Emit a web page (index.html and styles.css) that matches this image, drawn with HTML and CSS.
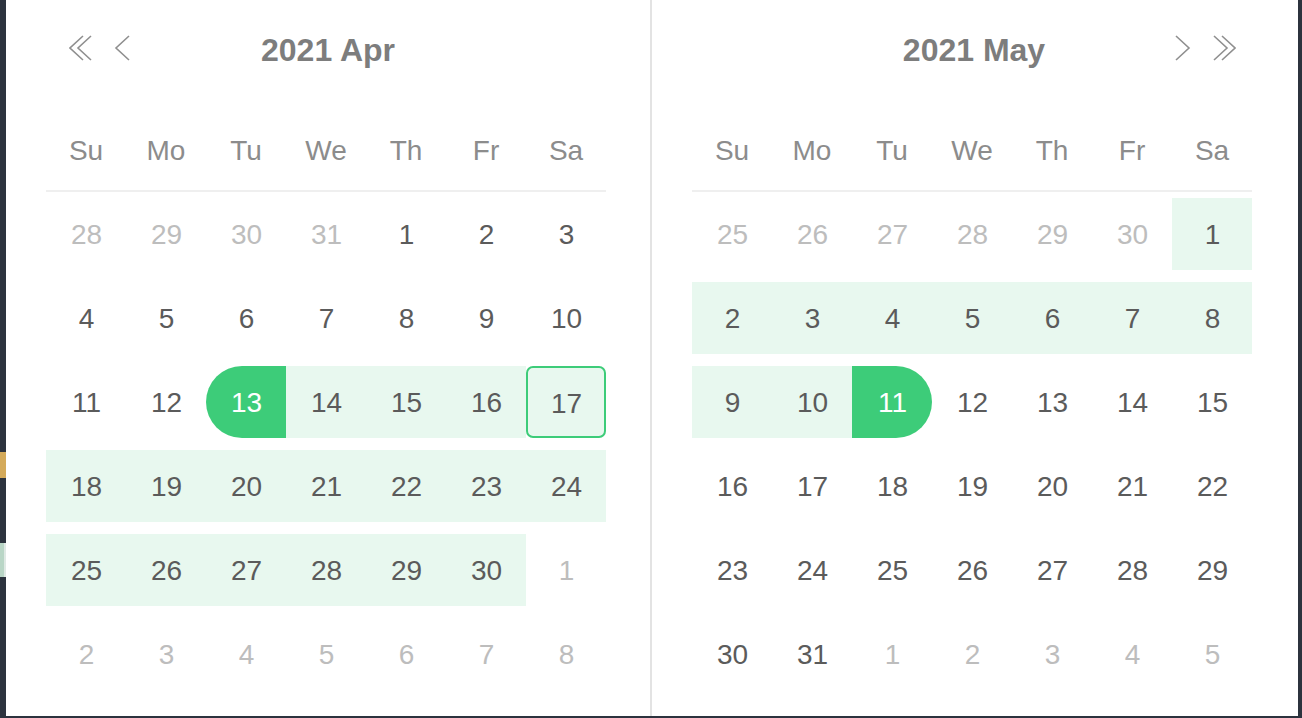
FILE: index.html
```html
<!DOCTYPE html>
<html>
<head>
<meta charset="utf-8">
<link rel="stylesheet" href="styles.css">
</head>
<body>
<div class="bg-bits">
  <span class="bit bit-gold"></span>
  <span class="bit bit-light"></span>
</div>
<div class="picker">
  <section class="panel panel-left">
    <header class="head">
      <div class="nav nav-left">
        <svg class="ico ico-dbl" viewBox="0 0 24 26"><path d="M14 1 L1 13 L14 25 M22 1 L9 13 L22 25"/></svg>
        <svg class="ico ico-sgl" viewBox="0 0 16 26"><path d="M15 1 L2 13 L15 25"/></svg>
      </div>
      <div class="title">2021 Apr</div>
      <div class="nav nav-right"></div>
    </header>
    <div class="weekdays">
      <span>Su</span><span>Mo</span><span>Tu</span><span>We</span><span>Th</span><span>Fr</span><span>Sa</span>
    </div>
    <div class="days">
      <div class="cell off"><span>28</span></div>
      <div class="cell off"><span>29</span></div>
      <div class="cell off"><span>30</span></div>
      <div class="cell off"><span>31</span></div>
      <div class="cell"><span>1</span></div>
      <div class="cell"><span>2</span></div>
      <div class="cell"><span>3</span></div>

      <div class="cell"><span>4</span></div>
      <div class="cell"><span>5</span></div>
      <div class="cell"><span>6</span></div>
      <div class="cell"><span>7</span></div>
      <div class="cell"><span>8</span></div>
      <div class="cell"><span>9</span></div>
      <div class="cell"><span>10</span></div>

      <div class="cell"><span>11</span></div>
      <div class="cell"><span>12</span></div>
      <div class="cell start"><span>13</span></div>
      <div class="cell range"><span>14</span></div>
      <div class="cell range"><span>15</span></div>
      <div class="cell range"><span>16</span></div>
      <div class="cell range today"><span>17</span></div>

      <div class="cell range"><span>18</span></div>
      <div class="cell range"><span>19</span></div>
      <div class="cell range"><span>20</span></div>
      <div class="cell range"><span>21</span></div>
      <div class="cell range"><span>22</span></div>
      <div class="cell range"><span>23</span></div>
      <div class="cell range"><span>24</span></div>

      <div class="cell range"><span>25</span></div>
      <div class="cell range"><span>26</span></div>
      <div class="cell range"><span>27</span></div>
      <div class="cell range"><span>28</span></div>
      <div class="cell range"><span>29</span></div>
      <div class="cell range"><span>30</span></div>
      <div class="cell off"><span>1</span></div>

      <div class="cell off"><span>2</span></div>
      <div class="cell off"><span>3</span></div>
      <div class="cell off"><span>4</span></div>
      <div class="cell off"><span>5</span></div>
      <div class="cell off"><span>6</span></div>
      <div class="cell off"><span>7</span></div>
      <div class="cell off"><span>8</span></div>
    </div>
  </section>
  <div class="divider"></div>
  <section class="panel panel-right">
    <header class="head">
      <div class="nav nav-left"></div>
      <div class="title">2021 May</div>
      <div class="nav nav-right">
        <svg class="ico ico-sgl" viewBox="0 0 16 26"><path d="M1 1 L14 13 L1 25"/></svg>
        <svg class="ico ico-dbl" viewBox="0 0 24 26"><path d="M2 1 L15 13 L2 25 M10 1 L23 13 L10 25"/></svg>
      </div>
    </header>
    <div class="weekdays">
      <span>Su</span><span>Mo</span><span>Tu</span><span>We</span><span>Th</span><span>Fr</span><span>Sa</span>
    </div>
    <div class="days">
      <div class="cell off"><span>25</span></div>
      <div class="cell off"><span>26</span></div>
      <div class="cell off"><span>27</span></div>
      <div class="cell off"><span>28</span></div>
      <div class="cell off"><span>29</span></div>
      <div class="cell off"><span>30</span></div>
      <div class="cell range"><span>1</span></div>

      <div class="cell range"><span>2</span></div>
      <div class="cell range"><span>3</span></div>
      <div class="cell range"><span>4</span></div>
      <div class="cell range"><span>5</span></div>
      <div class="cell range"><span>6</span></div>
      <div class="cell range"><span>7</span></div>
      <div class="cell range"><span>8</span></div>

      <div class="cell range"><span>9</span></div>
      <div class="cell range"><span>10</span></div>
      <div class="cell end"><span>11</span></div>
      <div class="cell"><span>12</span></div>
      <div class="cell"><span>13</span></div>
      <div class="cell"><span>14</span></div>
      <div class="cell"><span>15</span></div>

      <div class="cell"><span>16</span></div>
      <div class="cell"><span>17</span></div>
      <div class="cell"><span>18</span></div>
      <div class="cell"><span>19</span></div>
      <div class="cell"><span>20</span></div>
      <div class="cell"><span>21</span></div>
      <div class="cell"><span>22</span></div>

      <div class="cell"><span>23</span></div>
      <div class="cell"><span>24</span></div>
      <div class="cell"><span>25</span></div>
      <div class="cell"><span>26</span></div>
      <div class="cell"><span>27</span></div>
      <div class="cell"><span>28</span></div>
      <div class="cell"><span>29</span></div>

      <div class="cell"><span>30</span></div>
      <div class="cell"><span>31</span></div>
      <div class="cell off"><span>1</span></div>
      <div class="cell off"><span>2</span></div>
      <div class="cell off"><span>3</span></div>
      <div class="cell off"><span>4</span></div>
      <div class="cell off"><span>5</span></div>
    </div>
  </section>
</div>
</body>
</html>
```

FILE: styles.css
```css
html, body {
  margin: 0;
  padding: 0;
}
body {
  background: #2c333e;
  width: 1302px;
  height: 718px;
  overflow: hidden;
  font-family: "Liberation Sans", Arial, sans-serif;
  position: relative;
}
.bg-bits {
  position: absolute;
  left: 0;
  top: 0;
}
.bit {
  position: absolute;
  left: 0;
  width: 6px;
}
.bit-gold {
  top: 452px;
  height: 26px;
  background: #d4aa5a;
}
.bit-light {
  top: 543px;
  height: 34px;
  background: #b9d6c6;
  box-shadow: inset -2px 0 0 #dfe9e4;
}
.picker {
  margin-left: 6px;
  width: 1292px;
  height: 716px;
  background: #fff;
  display: flex;
}
.panel {
  padding: 0 0 0 40px;
  box-sizing: border-box;
}
.panel-left {
  width: 644px;
}
.panel-right {
  width: 646px;
}
.divider {
  width: 2px;
  background: #e3e3e3;
}
.head {
  width: 560px;
  height: 100px;
  display: grid;
  grid-template-columns: 1fr auto 1fr;
  align-items: center;
}
.title {
  font-size: 32px;
  font-weight: bold;
  color: #7d7d7d;
  padding-left: 4px;
  padding-top: 1px;
}
.nav {
  display: flex;
  align-items: center;
  gap: 21px;
  height: 26px;
  margin-top: -4px;
}
.nav-left {
  padding-left: 23px;
}
.nav-right {
  justify-content: flex-end;
  padding-right: 16px;
}
.ico {
  height: 26px;
  fill: none;
  stroke: #8f8f8f;
  stroke-width: 1.6;
}
.ico-dbl {
  width: 24px;
}
.ico-sgl {
  width: 16px;
}
.nav-right .ico-sgl {
  margin-left: 2px;
}
.weekdays {
  width: 560px;
  margin-top: 10px;
  height: 80px;
  display: grid;
  grid-template-columns: repeat(7, 80px);
  align-items: center;
  border-bottom: 2px solid #efefef;
}
.weekdays span {
  text-align: center;
  font-size: 28px;
  color: #8c8c8c;
  padding-top: 2px;
}
.days {
  width: 560px;
  display: grid;
  grid-template-columns: repeat(7, 80px);
  grid-auto-rows: 84px;
}
.cell {
  display: flex;
  align-items: center;
}
.cell span {
  width: 80px;
  height: 72px;
  box-sizing: border-box;
  display: flex;
  align-items: center;
  justify-content: center;
  font-size: 28px;
  color: #5b5b5b;
  padding-top: 2px;
  padding-left: 1px;
}
.cell.off span {
  color: #bdbdbd;
}
.cell.range span {
  background: #e8f8ef;
}
.cell.start span {
  background: #3dcc79;
  color: #fff;
  border-radius: 36px 0 0 36px;
}
.cell.end span {
  background: #3dcc79;
  color: #fff;
  border-radius: 0 36px 36px 0;
}
.cell.today span {
  border: 2px solid #3dcc79;
  border-radius: 7px;
  padding-top: 4px;
}
```
